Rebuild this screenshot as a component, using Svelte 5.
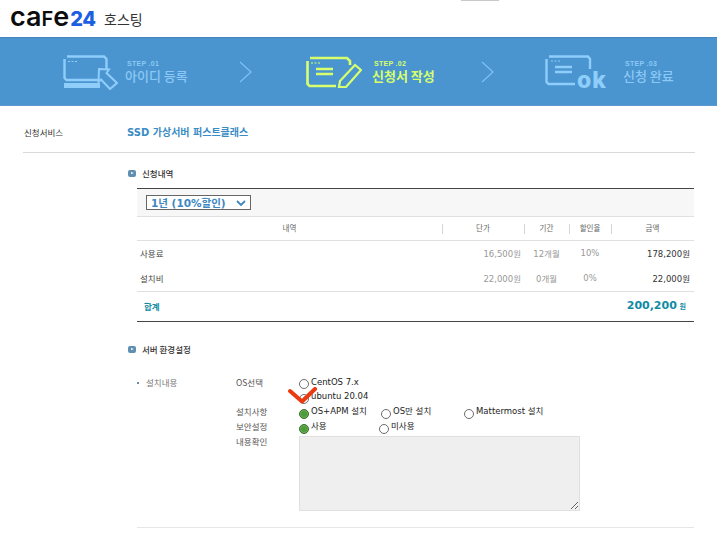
<script>
	const rows = [
		{ name: '사용료', price: '16,500원', term: '12개월', rate: '10%', total: '178,200원' },
		{ name: '설치비', price: '22,000원', term: '0개월', rate: '0%', total: '22,000원' }
	];
</script>

<div class="page">
	<header class="top">
		<span class="logo">ca<span class="f">f</span>e<b>24</b></span>
		<span class="hosting">호스팅</span>
		<i class="tab"></i>
	</header>

	<div class="banner">
		<div class="step s1">
			<svg width="56" height="36" viewBox="0 0 56 36" fill="none" stroke="#8fcdfb" stroke-width="2.4">
				<path d="M2.5 5V24L4.5 26H36M5 2.5H42L44.5 5V15" />
				<path d="M2 31.5H38" stroke-width="5" />
				<path d="M6 7.5h2M9.5 7.5h2M13 7.5h2" stroke-width="1" />
				<path d="M37 15L47 15.5L44.5 19L55 29L48 35L39 25.5L36.5 28Z" stroke-width="2" fill="#4a95cf" />
			</svg>
			<div class="words">
				<small>STEP .01</small>
				<strong>아이디 등록</strong>
			</div>
		</div>
		<svg class="chev" width="14" height="22" viewBox="0 0 14 22" fill="none" stroke="#7dbff2" stroke-width="1.3"><path d="M1 1L12 11L1 21" /></svg>
		<div class="step s2 on">
			<svg width="57" height="34" viewBox="0 0 57 34" fill="none" stroke="#d7ff6e" stroke-width="2.6">
				<path d="M2.5 6V29L4.5 31H31M5 3H42L45 6V10" />
				<path d="M6 8h2M9.5 8h2M13 8h2" stroke-width="1" />
				<path d="M11 14H28M11 19H28" stroke-width="2.6" />
				<path d="M35 26L50 10L56 15L41 32L34 32Z" stroke-width="2.2" />
			</svg>
			<div class="words">
				<small>STEP .02</small>
				<strong>신청서 작성</strong>
			</div>
		</div>
		<svg class="chev" width="14" height="22" viewBox="0 0 14 22" fill="none" stroke="#7dbff2" stroke-width="1.3"><path d="M1 1L12 11L1 21" /></svg>
		<div class="step s3">
			<svg width="66" height="44" viewBox="0 -5 66 44" fill="none" stroke="#8fcdfb" stroke-width="2.4">
				<path d="M1.5 4V27L3.5 29H30M4 1.5H43L45 4V14" />
				<path d="M6 6h2M9.5 6h2M13 6h2" stroke-width="1" />
				<path d="M10 12H27M10 17H27" stroke-width="2.4" />
				<text class="ok" x="32" y="33" fill="#8fcdfb" stroke="none">ok</text>
			</svg>
			<div class="words">
				<small>STEP .03</small>
				<strong>신청 완료</strong>
			</div>
		</div>
	</div>

	<div class="service">
		<span class="service-label">신청서비스</span>
		<span class="service-name">SSD 가상서버 퍼스트클래스</span>
	</div>

	<section class="detail">
		<h3 class="heading"><i class="bullet"></i>신청내역</h3>
		<div class="box">
			<div class="period">
				<span class="select">1년 (10%할인)
					<svg width="10" height="6" viewBox="0 0 10 6" fill="none" stroke="#3d87c2" stroke-width="1.8"><path d="M1 1L5 5L9 1" /></svg>
				</span>
			</div>
			<table>
				<colgroup>
					<col class="c-name" />
					<col class="c-price" />
					<col class="c-term" />
					<col class="c-rate" />
					<col />
				</colgroup>
				<thead>
					<tr>
						<th>내역</th>
						<th><i></i>단가</th>
						<th><i></i>기간</th>
						<th><i></i>할인율</th>
						<th><i></i>금액</th>
					</tr>
				</thead>
				<tbody>
					{#each rows as row}
						<tr>
							<td class="name">{row.name}</td>
							<td class="price">{row.price}</td>
							<td class="mid">{row.term}</td>
							<td class="mid">{row.rate}</td>
							<td class="total">{row.total}</td>
						</tr>
					{/each}
				</tbody>
				<tfoot>
					<tr>
						<td colspan="4" class="sum-label">합계</td>
						<td class="sum"><b>200,200</b> <small>원</small></td>
					</tr>
				</tfoot>
			</table>
		</div>
	</section>

	<section class="env">
		<h3 class="heading"><i class="bullet"></i>서버 환경설정</h3>
		<div class="form">
			<div class="form-title">설치내용</div>
			<div class="fields">
				<span class="field-label">OS선택</span>
				<div class="options stack">
					<label><input type="radio" name="os" />CentOS 7.x</label>
					<label><input type="radio" name="os" />ubuntu 20.04</label>
				</div>
				<span class="field-label">설치사항</span>
				<div class="options">
					<label class="w82"><input type="radio" name="pkg" checked />OS+APM 설치</label>
					<label class="w83"><input type="radio" name="pkg" />OS만 설치</label>
					<label><input type="radio" name="pkg" />Mattermost 설치</label>
				</div>
				<span class="field-label">보안설정</span>
				<div class="options">
					<label class="w80"><input type="radio" name="sec" checked />사용</label>
					<label><input type="radio" name="sec" />미사용</label>
				</div>
				<span class="field-label">내용확인</span>
				<textarea readonly></textarea>
			</div>
			<svg class="check" width="30" height="18" viewBox="0 0 30 18" fill="none" stroke="#ea3a10" stroke-width="4" stroke-linecap="round" stroke-linejoin="round"><path d="M2 4L14 14.5L27 2" /></svg>
		</div>
	</section>
</div>

<style>
	:global(body) {
		margin: 0;
		background: #fff;
	}
	.page {
		width: 717px;
		height: 536px;
		overflow: hidden;
		font-family: "DejaVu Sans", "Noto Sans CJK KR", sans-serif;
		font-size: 8.5px;
		color: #333;
	}
	.top {
		position: relative;
		height: 37px;
		display: flex;
		align-items: center;
		padding-left: 10px;
		box-sizing: border-box;
	}
	.logo {
		font-family: Inter, sans-serif;
		font-weight: 600;
		font-size: 27px;
		color: #0c0c0c;
		line-height: 1;
		width: 94px;
		margin-top: -5px;
		white-space: nowrap;
	}
	.logo .f {
		font-size: 20px;
		text-transform: uppercase;
	}
	.logo b {
		color: #1c5fe0;
		font-weight: 800;
		font-size: 20px;
		margin-left: 1px;
		letter-spacing: -0.5px;
	}
	.hosting {
		font-family: "Noto Sans CJK KR", sans-serif;
		font-size: 14px;
		color: #333;
	}
	.tab {
		position: absolute;
		left: 461px;
		top: 0;
		width: 38px;
		height: 1px;
		background: #c9c9c9;
	}
	.banner {
		height: 69px;
		box-sizing: border-box;
		background: #4a95cf;
		border-top: 1px solid #4584bd;
		border-bottom: 1px solid #5c99cc;
		display: flex;
		align-items: center;
		padding-left: 62px;
	}
	.step {
		display: flex;
		align-items: center;
		color: #8cc8f5;
	}
	.s1 {
		width: 177px;
		gap: 7px;
	}
	.s2 {
		width: 176px;
		gap: 10px;
		margin-left: 52px;
	}
	.s3 {
		gap: 12px;
		margin-left: 50px;
	}
	.step.on {
		color: #d7ff6e;
	}
	.words {
		display: flex;
		flex-direction: column;
		font-family: "Liberation Sans", "Noto Sans CJK KR", sans-serif;
	}
	.words small {
		font-size: 7px;
		font-weight: 700;
		line-height: 8px;
		padding-left: 2px;
		letter-spacing: 0.3px;
	}
	.words strong {
		font-family: "Noto Sans CJK KR", sans-serif;
		font-size: 13px;
		line-height: 15px;
		font-weight: 500;
	}
	.s2 .words strong {
		font-weight: 700;
	}
	.chev {
		flex: none;
	}
	.service {
		margin: 0 22px 0 23px;
		border-bottom: 1px solid #d9d9d9;
		display: flex;
		align-items: center;
		padding-top: 5px;
		height: 41px;
	}
	.service-label {
		width: 103px;
		padding-left: 1px;
		font-family: "Noto Sans CJK KR", sans-serif;
		font-size: 8.5px;
		color: #333;
	}
	.service-name {
		font-weight: 700;
		font-size: 10px;
		color: #3a8cc4;
	}
	.heading {
		margin: 0;
		display: flex;
		align-items: center;
		gap: 6px;
		font-family: "Noto Sans CJK KR", sans-serif;
		font-size: 8.5px;
		font-weight: 500;
		color: #333;
		line-height: 12px;
	}
	.bullet {
		width: 8px;
		height: 7px;
		border-radius: 2px;
		background: #5f8fb0;
		position: relative;
	}
	.bullet::after {
		content: '';
		position: absolute;
		left: 3px;
		top: 2px;
		border-left: 3px solid #fff;
		border-top: 1.5px solid transparent;
		border-bottom: 1.5px solid transparent;
	}
	.detail {
		margin-left: 128px;
		padding-top: 14px;
	}
	.box {
		margin: 9px 23px 0 9px;
		border-top: 1px solid #444;
	}
	.period {
		height: 27px;
		background: #f7f7f7;
		border-bottom: 1px solid #e0e0e0;
		display: flex;
		align-items: center;
		padding-left: 9px;
	}
	.select {
		height: 15px;
		width: 105px;
		box-sizing: border-box;
		border: 1px solid #666;
		background: #fff;
		display: flex;
		align-items: center;
		justify-content: space-between;
		padding: 0 4px;
		font-weight: 700;
		font-size: 10.5px;
		color: #3d87c2;
		white-space: nowrap;
	}
	table {
		width: 100%;
		border-collapse: collapse;
		table-layout: fixed;
	}
	.c-name {
		width: 305px;
	}
	.c-price {
		width: 82px;
	}
	.c-term {
		width: 45px;
	}
	.c-rate {
		width: 42px;
	}
	th {
		height: 21px;
		padding: 0 0 2px;
		position: relative;
		font-family: "Noto Sans CJK KR", sans-serif;
		font-weight: 400;
		font-size: 7.5px;
		color: #666;
		border-bottom: 1px solid #e0e0e0;
	}
	th i {
		position: absolute;
		left: 0;
		top: 7px;
		width: 1px;
		height: 10px;
		background: #d5d5d5;
	}
	td {
		padding: 0 0 2px;
		height: 23px;
		white-space: nowrap;
	}
	.name {
		padding-left: 3px;
		font-family: "Noto Sans CJK KR", sans-serif;
		color: #444;
	}
	.price {
		text-align: right;
		padding-right: 3px;
		color: #999;
	}
	.mid {
		text-align: center;
		color: #999;
	}
	.total {
		text-align: right;
		padding-right: 4px;
		color: #333;
	}
	tfoot td {
		height: 27px;
		border-top: 1px solid #e0e0e0;
		border-bottom: 1px solid #444;
		color: #0f8aa3;
	}
	.sum-label {
		padding-left: 7px;
		font-family: "Noto Sans CJK KR", sans-serif;
		font-weight: 700;
	}
	.sum {
		text-align: right;
		padding-right: 8px;
	}
	.sum b {
		font-size: 11px;
		font-weight: 700;
	}
	.sum small {
		font-size: 7px;
		font-weight: 700;
	}
	.env {
		margin-left: 128px;
		padding-top: 21px;
	}
	.form {
		position: relative;
		margin: 0 23px 0 9px;
		padding-top: 20px;
		height: 152px;
		border-bottom: 1px solid #e6e6e6;
		display: flex;
		color: #555;
		font-family: "Noto Sans CJK KR", sans-serif;
	}
	.form-title {
		width: 99px;
		padding-left: 9px;
		box-sizing: border-box;
		line-height: 15px;
		color: #777;
		position: relative;
	}
	.form-title::before {
		content: '';
		position: absolute;
		left: 0;
		top: 7px;
		width: 2px;
		height: 2px;
		background: #6a8ea8;
	}
	.fields {
		display: grid;
		grid-template-columns: 63px 1fr;
		grid-auto-rows: min-content;
		align-content: start;
		line-height: 15px;
	}
	.field-label {
		color: #555;
	}
	.options {
		display: flex;
		height: 15px;
		color: #222;
		font-family: "DejaVu Sans", "Noto Sans CJK KR", sans-serif;
		white-space: nowrap;
	}
	.stack {
		flex-direction: column;
		height: 29px;
	}
	.stack label {
		height: 14.5px;
	}
	label {
		display: flex;
		align-items: center;
		gap: 2px;
		height: 15px;
	}
	.w82 {
		width: 82px;
	}
	.w83 {
		width: 83px;
	}
	.w80 {
		width: 80px;
	}
	input[type='radio'] {
		appearance: none;
		margin: 4px 0 0;
		width: 10px;
		height: 10px;
		box-sizing: border-box;
		border: 1px solid #6d6d6d;
		border-radius: 50%;
		background: #fff;
	}
	input[type='radio']:checked {
		border-color: #3c6e2f;
		background: #4f9a3c;
		box-shadow: inset 0 0 0 1px #6bb356;
	}
	textarea {
		width: 281px;
		height: 75px;
		box-sizing: border-box;
		margin: 2px 0 0;
		padding: 0;
		background: #efefef;
		border: 1px solid #e0e0e0;
		border-radius: 0;
		display: block;
	}
	.check {
		position: absolute;
		left: 151px;
		top: 32px;
	}
	.ok {
		font-family: Inter, sans-serif;
		font-weight: 800;
		font-size: 23px;
		letter-spacing: 1px;
	}
</style>
